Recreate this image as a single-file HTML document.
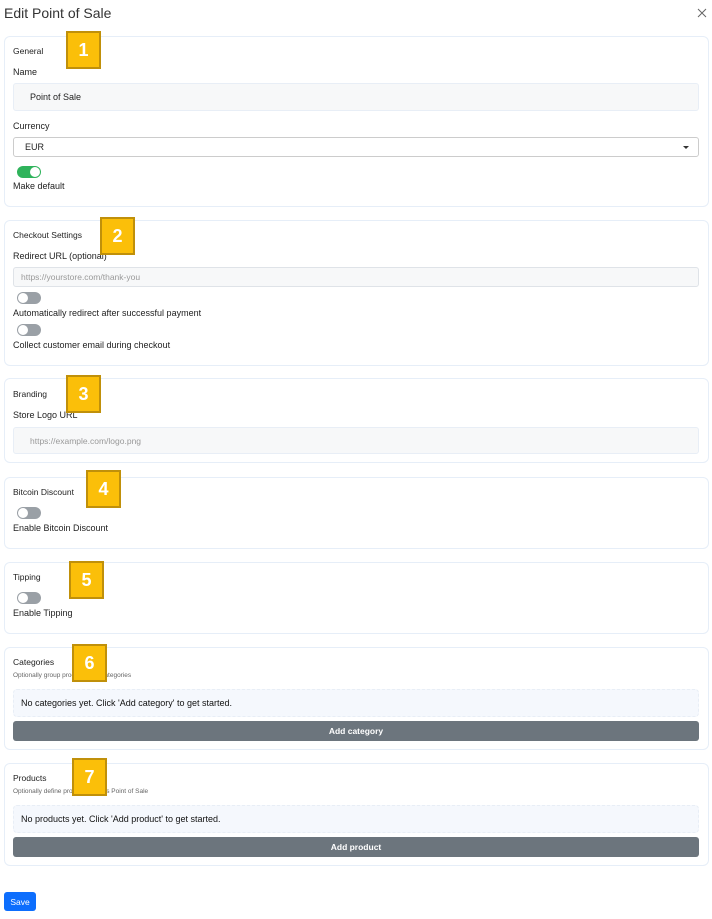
<!DOCTYPE html>
<html><head><style>
*{box-sizing:border-box;margin:0;padding:0}
body{width:712px;height:919px;background:#fff;font-family:"Liberation Sans",Arial,sans-serif;color:#212529;position:relative;overflow:hidden}
.a{position:absolute}
.card{position:absolute;left:4px;width:705px;border:1px solid #e6eef8;border-radius:6px;background:#fff}
.t{position:absolute;font-size:9px;color:#222;white-space:nowrap}
.inp{position:absolute;left:13px;width:686px;border:1px solid #dfe3e8;border-radius:3px;background:#f7f8f9;font-size:9px;color:#999;padding-left:16px;display:flex;align-items:center}
.tg{position:absolute;left:17px;width:24px;height:12px;border-radius:6px;background:#9aa0a6}
.tg::after{content:"";position:absolute;left:1px;top:1px;width:10px;height:10px;border-radius:50%;background:#fff}
.tg.on{background:#2fb35b}.tg.on::after{left:13px}
.badge{position:absolute;width:35px;height:38px;background:#fbbf09;border:2px solid #c0900a;color:#fff;font-weight:bold;font-size:18px;display:flex;align-items:center;justify-content:center}
.box{position:absolute;left:13px;width:686px;height:28px;background:#f5f8fd;border:1px dashed #e8eef6;border-radius:4px;font-size:9px;color:#111;padding-left:7px;display:flex;align-items:center}
.btn{position:absolute;left:13px;width:686px;height:20px;background:#6c757d;border-radius:3px;color:#fff;font-size:8.5px;font-weight:bold;display:flex;align-items:center;justify-content:center}
.sub{position:absolute;left:13px;font-size:6.5px;color:#666;white-space:nowrap}
</style></head><body>
<div class="a" style="left:4px;top:5px;font-size:14px;color:#333">Edit Point of Sale</div>
<svg class="a" style="left:697px;top:8px" width="10" height="10" viewBox="0 0 10 10"><path d="M1 1L9 9M9 1L1 9" stroke="#666" stroke-width="1"/></svg>

<div class="card" style="top:36px;height:171px"></div>
<div class="t" style="left:13px;top:46px;font-size:8.5px">General</div>
<div class="t" style="left:13px;top:67px">Name</div>
<div class="inp" style="top:83px;height:28px;color:#222;background:#f7f8f9;border-color:#e8eef6">Point of Sale</div>
<div class="t" style="left:13px;top:121px">Currency</div>
<div class="inp" style="top:137px;height:20px;color:#222;padding-left:11px;background:#fff;border-color:#ccc">EUR</div>
<div class="a" style="left:683px;top:146px;width:0;height:0;border-left:3px solid transparent;border-right:3px solid transparent;border-top:3px solid #333"></div>
<div class="tg on" style="top:166px"></div>
<div class="t" style="left:13px;top:181px">Make default</div>

<div class="card" style="top:220px;height:146px"></div>
<div class="t" style="left:13px;top:230px;font-size:8.5px">Checkout Settings</div>
<div class="t" style="left:13px;top:251px">Redirect URL (optional)</div>
<div class="inp" style="top:267px;height:20px;padding-left:7px;font-size:8.5px">https://yourstore.com/thank-you</div>
<div class="tg" style="top:292px"></div>
<div class="t" style="left:13px;top:308px">Automatically redirect after successful payment</div>
<div class="tg" style="top:324px"></div>
<div class="t" style="left:13px;top:340px">Collect customer email during checkout</div>

<div class="card" style="top:378px;height:85px"></div>
<div class="t" style="left:13px;top:389px;font-size:8.5px">Branding</div>
<div class="t" style="left:13px;top:410px">Store Logo URL</div>
<div class="inp" style="top:427px;height:27px;font-size:8.5px;border-color:#e8eef6">https://example.com/logo.png</div>

<div class="card" style="top:477px;height:72px"></div>
<div class="t" style="left:13px;top:487px;font-size:8.5px">Bitcoin Discount</div>
<div class="tg" style="top:507px"></div>
<div class="t" style="left:13px;top:523px">Enable Bitcoin Discount</div>

<div class="card" style="top:562px;height:72px"></div>
<div class="t" style="left:13px;top:572px;font-size:8.5px">Tipping</div>
<div class="tg" style="top:592px"></div>
<div class="t" style="left:13px;top:608px">Enable Tipping</div>

<div class="card" style="top:647px;height:103px"></div>
<div class="t" style="left:13px;top:657px;font-size:8.5px">Categories</div>
<div class="sub" style="top:672px">Optionally group products into categories</div>
<div class="box" style="top:689px">No categories yet. Click 'Add category' to get started.</div>
<div class="btn" style="top:721px">Add category</div>

<div class="card" style="top:763px;height:103px"></div>
<div class="t" style="left:13px;top:773px;font-size:8.5px">Products</div>
<div class="sub" style="top:788px">Optionally define products for this Point of Sale</div>
<div class="box" style="top:805px">No products yet. Click 'Add product' to get started.</div>
<div class="btn" style="top:837px">Add product</div>

<div class="a" style="left:4px;top:892px;width:32px;height:19px;background:#0d6efd;border-radius:3px;color:#fff;font-size:8.5px;display:flex;align-items:center;justify-content:center">Save</div>

<div class="badge" style="left:66px;top:31px">1</div>
<div class="badge" style="left:100px;top:217px">2</div>
<div class="badge" style="left:66px;top:375px">3</div>
<div class="badge" style="left:86px;top:470px">4</div>
<div class="badge" style="left:69px;top:561px">5</div>
<div class="badge" style="left:72px;top:644px">6</div>
<div class="badge" style="left:72px;top:758px">7</div>
</body></html>
